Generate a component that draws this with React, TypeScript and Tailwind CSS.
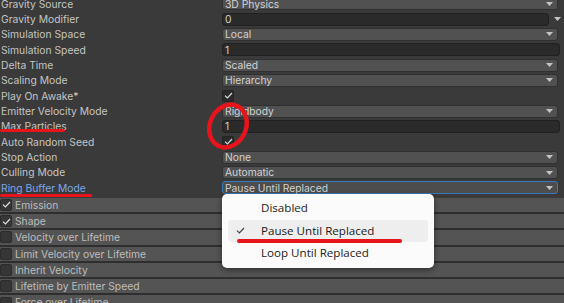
import React from 'react'

type Prop = {
  label: string
  kind: 'dropdown' | 'text' | 'check' | 'numdrop'
  value?: string
  blue?: boolean
}

const props: Prop[] = [
  { label: 'Gravity Source', kind: 'dropdown', value: '3D Physics' },
  { label: 'Gravity Modifier', kind: 'numdrop', value: '0' },
  { label: 'Simulation Space', kind: 'dropdown', value: 'Local' },
  { label: 'Simulation Speed', kind: 'text', value: '1' },
  { label: 'Delta Time', kind: 'dropdown', value: 'Scaled' },
  { label: 'Scaling Mode', kind: 'dropdown', value: 'Hierarchy' },
  { label: 'Play On Awake*', kind: 'check' },
  { label: 'Emitter Velocity Mode', kind: 'dropdown', value: 'Rigidbody' },
  { label: 'Max Particles', kind: 'text', value: '1' },
  { label: 'Auto Random Seed', kind: 'check' },
  { label: 'Stop Action', kind: 'dropdown', value: 'None' },
  { label: 'Culling Mode', kind: 'dropdown', value: 'Automatic' },
  { label: 'Ring Buffer Mode', kind: 'dropdown', value: 'Pause Until Replaced', blue: true },
]

const modules = [
  { name: 'Emission', on: true },
  { name: 'Shape', on: true },
  { name: 'Velocity over Lifetime', on: false },
  { name: 'Limit Velocity over Lifetime', on: false },
  { name: 'Inherit Velocity', on: false },
  { name: 'Lifetime by Emitter Speed', on: false },
  { name: 'Force over Lifetime', on: false },
]

function Arrow() {
  return (
    <svg width="7" height="4" viewBox="0 0 7 4" className="shrink-0">
      <path d="M0 0 H7 L3.5 4 Z" fill="#c4c4c4" />
    </svg>
  )
}

function Check({ color = '#d8d8d8' }: { color?: string }) {
  return (
    <svg width="9" height="7" viewBox="0 0 9 7">
      <path d="M1 3.6 L3.4 6 L8 1" fill="none" stroke={color} strokeWidth="1.2" />
    </svg>
  )
}

function Value({ p }: { p: Prop }) {
  if (p.kind === 'check') {
    return (
      <div className="flex h-[12px] w-[12px] items-center justify-center rounded-[2px] border border-[#232323] bg-[#2a2a2a]">
        <Check />
      </div>
    )
  }
  if (p.kind === 'text') {
    return (
      <div className="mr-[4px] flex h-[13px] flex-1 items-center rounded-[3px] border border-[#212121] bg-[#2a2a2a] pl-[2px] text-[#d2d2d2]">
        {p.value}
      </div>
    )
  }
  if (p.kind === 'numdrop') {
    return (
      <div className="flex flex-1 items-center">
        <div className="flex h-[13px] flex-1 items-center rounded-[3px] border border-[#212121] bg-[#2a2a2a] pl-[2px] text-[#d2d2d2]">
          {p.value}
        </div>
        <div className="flex w-[15px] justify-center pl-[1px]">
          <Arrow />
        </div>
      </div>
    )
  }
  return (
    <div
      className={`mr-[6px] flex h-[13px] flex-1 items-center justify-between rounded-[3px] border pl-[2px] pr-[4px] text-[#d2d2d2] ${
        p.blue ? 'border-[#3a79bb] bg-[#4d4d4d]' : 'border-[#303030] bg-[#515151]'
      }`}
    >
      <span>{p.value}</span>
      <Arrow />
    </div>
  )
}

export default function App() {
  return (
    <div className="relative h-[303px] w-[564px] overflow-hidden bg-[#3a3a3a] font-['Inter','Liberation_Sans',sans-serif] text-[10.3px] leading-none">
      <div className="-mt-[4px] flex flex-col">
        {props.map((p) => (
          <div key={p.label} className="flex h-[15.36px] items-center">
            <div className={`w-[222px] pl-[1px] ${p.blue ? 'text-[#7ba6e8]' : 'text-[#c4c4c4]'}`}>{p.label}</div>
            <div className="flex flex-1 items-center">
              <Value p={p} />
            </div>
          </div>
        ))}
      </div>

      <div className="mt-[2px] flex flex-col">
        {modules.map((m) => (
          <div key={m.name} className="flex h-[16.3px] items-center border-b-[2px] border-[#2e2e2e] bg-[#545454]">
            <div className="flex h-[12px] w-[12px] items-center justify-center rounded-[2px] border border-[#2c2c2c] bg-[#363636]">
              {m.on ? <Check color="#e0e0e0" /> : null}
            </div>
            <span className="pl-[3px] text-[#bdbdbd]">{m.name}</span>
          </div>
        ))}
      </div>

      {/* dropdown menu */}
      <div className="absolute left-[222px] top-[194px] flex w-[212px] flex-col rounded-[5px] bg-[#fbfbfb] px-[6px] py-[3px] font-['Open_Sans','Noto_Sans',sans-serif] text-[11.6px] text-[#1b1b1b] shadow-[0_2px_6px_rgba(0,0,0,0.45)]">
        <div className="flex h-[22.5px] items-center pl-[33px]">Disabled</div>
        <div className="flex h-[22.5px] items-center rounded-[4px] bg-[#eeeeee] pl-[8px]">
          <span className="w-[25px]">
            <Check color="#444444" />
          </span>
          Pause Until Replaced
        </div>
        <div className="flex h-[22.5px] items-center pl-[33px]">Loop Until Replaced</div>
      </div>

      {/* red annotations */}
      <div className="absolute left-0 top-[129px] h-[3px] w-[65px] rounded-full bg-[#e8141b]" />
      <div className="absolute left-0 top-[194px] h-[3px] w-[92px] rounded-full bg-[#e8141b]" />
      <div className="absolute left-[237px] top-[239px] h-[4px] w-[165px] rounded-full bg-[#e8141b]" />
      <svg className="absolute left-[200px] top-[98px]" width="56" height="56" viewBox="0 0 56 56">
        <ellipse
          cx="28"
          cy="28"
          rx="18"
          ry="22"
          transform="rotate(25 28 28)"
          fill="none"
          stroke="#e8141b"
          strokeWidth="4.5"
        />
      </svg>
    </div>
  )
}
